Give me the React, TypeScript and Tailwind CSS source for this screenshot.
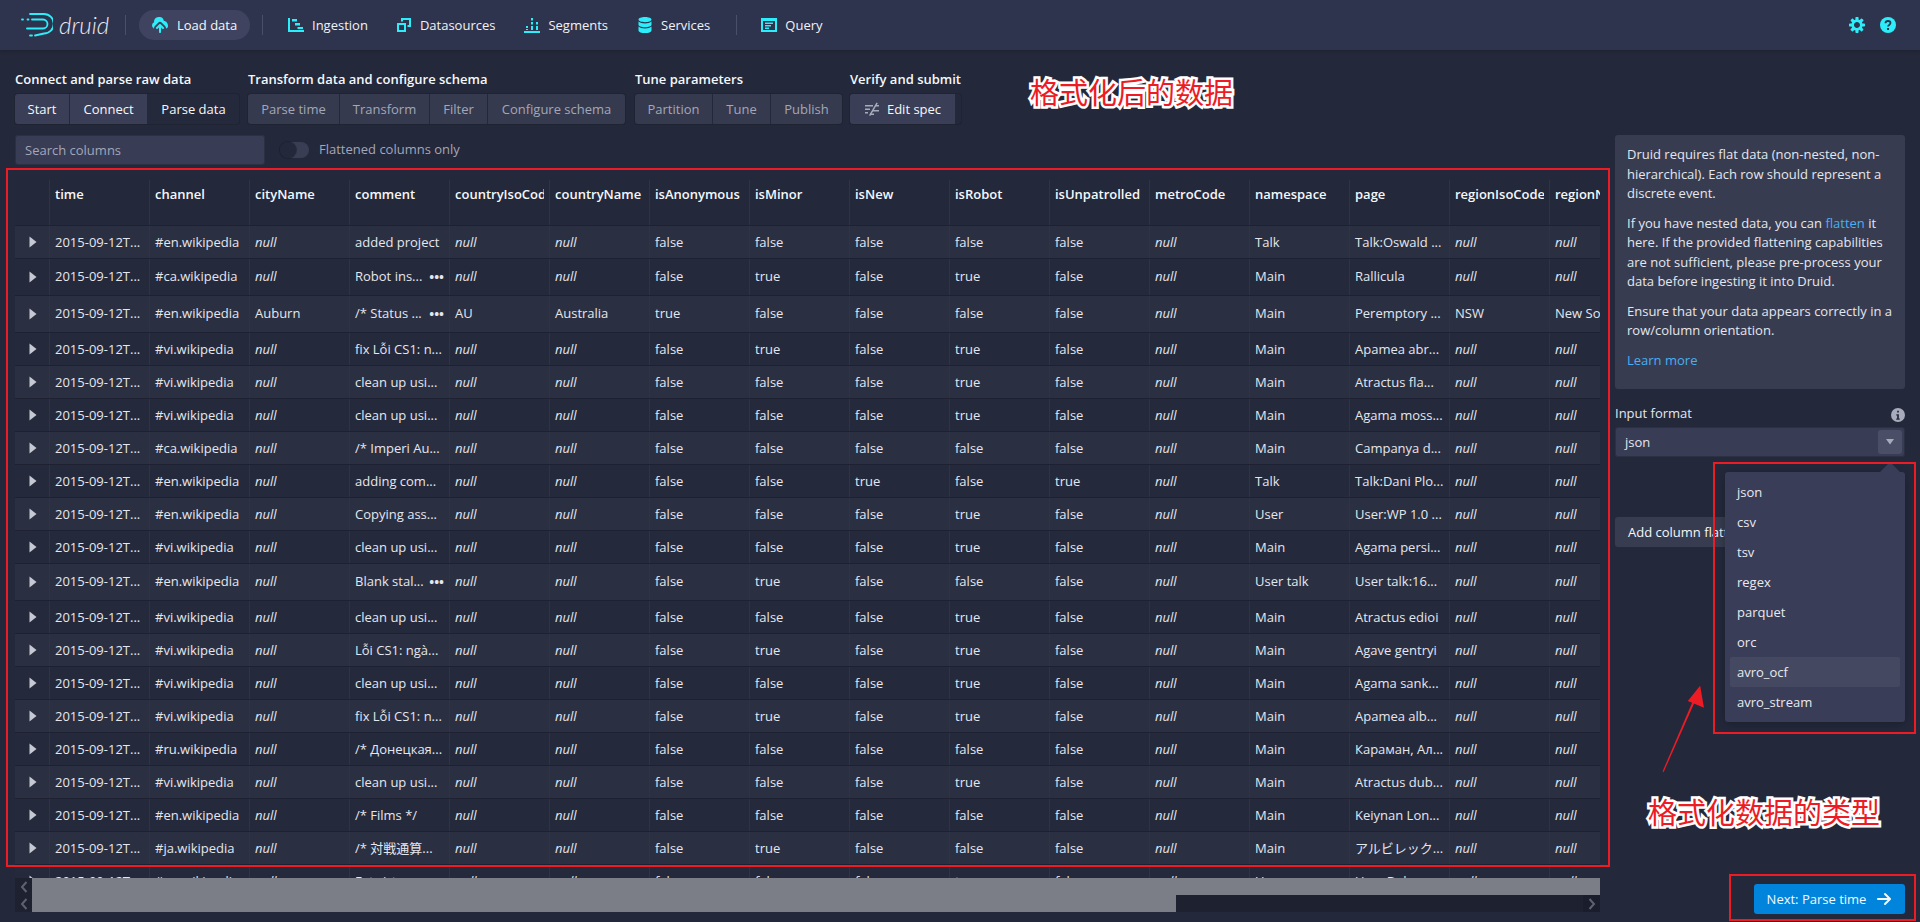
import type { ReactNode } from 'react';

const COLUMNS = [
  'time', 'channel', 'cityName', 'comment', 'countryIsoCode', 'countryName', 'isAnonymous', 'isMinor',
  'isNew', 'isRobot', 'isUnpatrolled', 'metroCode', 'namespace', 'page', 'regionIsoCode', 'regionName',
];

const TIME = '2015-09-12T...';

// channel, city, comment, more?, iso, country, anon, minor, new, robot, unpatrolled, ns, page, region iso, region
type Row = [string, string, string, boolean, string, string, string, string, string, string, string, string, string, string, string];

const N = 'null';
const F = 'false';
const T = 'true';

const ROWS: Row[] = [
  ['#en.wikipedia', N, 'added project', false, N, N, F, F, F, F, F, 'Talk', 'Talk:Oswald ...', N, N],
  ['#ca.wikipedia', N, 'Robot ins...', true, N, N, F, T, F, T, F, 'Main', 'Rallicula', N, N],
  ['#en.wikipedia', 'Auburn', '/* Status ...', true, 'AU', 'Australia', T, F, F, F, F, 'Main', 'Peremptory ...', 'NSW', 'New South Wales'],
  ['#vi.wikipedia', N, 'fix Lỗi CS1: n...', false, N, N, F, T, F, T, F, 'Main', 'Apamea abr...', N, N],
  ['#vi.wikipedia', N, 'clean up usi...', false, N, N, F, F, F, T, F, 'Main', 'Atractus fla...', N, N],
  ['#vi.wikipedia', N, 'clean up usi...', false, N, N, F, F, F, T, F, 'Main', 'Agama moss...', N, N],
  ['#ca.wikipedia', N, '/* Imperi Au...', false, N, N, F, F, F, F, F, 'Main', 'Campanya d...', N, N],
  ['#en.wikipedia', N, 'adding com...', false, N, N, F, F, T, F, T, 'Talk', 'Talk:Dani Plo...', N, N],
  ['#en.wikipedia', N, 'Copying ass...', false, N, N, F, F, F, T, F, 'User', 'User:WP 1.0 ...', N, N],
  ['#vi.wikipedia', N, 'clean up usi...', false, N, N, F, F, F, T, F, 'Main', 'Agama persi...', N, N],
  ['#en.wikipedia', N, 'Blank stal...', true, N, N, F, T, F, F, F, 'User talk', 'User talk:16...', N, N],
  ['#vi.wikipedia', N, 'clean up usi...', false, N, N, F, F, F, T, F, 'Main', 'Atractus edioi', N, N],
  ['#vi.wikipedia', N, 'Lỗi CS1: ngà...', false, N, N, F, T, F, T, F, 'Main', 'Agave gentryi', N, N],
  ['#vi.wikipedia', N, 'clean up usi...', false, N, N, F, F, F, T, F, 'Main', 'Agama sank...', N, N],
  ['#vi.wikipedia', N, 'fix Lỗi CS1: n...', false, N, N, F, T, F, T, F, 'Main', 'Apamea alb...', N, N],
  ['#ru.wikipedia', N, '/* Донецкая...', false, N, N, F, F, F, F, F, 'Main', 'Караман, Ал...', N, N],
  ['#vi.wikipedia', N, 'clean up usi...', false, N, N, F, F, F, T, F, 'Main', 'Atractus dub...', N, N],
  ['#en.wikipedia', N, '/* Films */', false, N, N, F, F, F, F, F, 'Main', 'Keiynan Lon...', N, N],
  ['#ja.wikipedia', N, '/* 対戦通算...', false, N, N, F, T, F, F, F, 'Main', 'アルビレック...', N, N],
  ['#en.wikipedia', N, 'Fate/stay ...', false, N, N, F, F, F, T, F, 'User', 'User:Dalam...', N, N],
];

function Icon({ children, className = 'text-[#2ceefb]' }: { children: ReactNode; className?: string }) {
  return (
    <svg viewBox="0 0 16 16" className={`h-4 w-4 shrink-0 ${className}`} fill="currentColor">
      {children}
    </svg>
  );
}

function NavItem({ icon, label, className = '' }: { icon: ReactNode; label: string; className?: string }) {
  return (
    <div className={`flex h-[30px] items-center gap-[8px] text-[13px] text-[#f0f2f7] ${className}`}>
      {icon}
      <span className="pt-[1px]">{label}</span>
    </div>
  );
}

function Separator({ className = '' }: { className?: string }) {
  return <div className={`h-5 w-px bg-[#4a4e66] ${className}`} />;
}

function StepButton({ label, state, width }: { label: string; state: 'on' | 'active' | 'off'; width: string }) {
  const look = {
    on: 'bg-[#3a3f57] text-[#f5f8fa]',
    active: 'bg-[#25293c] text-[#f5f8fa]',
    off: 'bg-[#363a4f] text-[#a3a7b8]',
  }[state];
  return (
    <div className={`flex h-[30px] items-center justify-center border-r border-[#24283b] pt-[2px] text-[13px] last:border-r-0 ${width} ${look}`}>
      {label}
    </div>
  );
}

function StepGroup({ title, children, className = '' }: { title: string; children: ReactNode; className?: string }) {
  return (
    <div className={className}>
      <div className="mb-[7px] h-[17px] text-[13px] leading-[19px] font-semibold whitespace-nowrap text-[#f5f8fa]">{title}</div>
      <div className="flex overflow-hidden rounded-[3px] shadow-[0_0_0_1px_rgba(16,22,26,0.25)]">{children}</div>
    </div>
  );
}

function Cell({ value, more, tall }: { value: string; more?: boolean; tall: boolean }) {
  return (
    <div
      className={`flex h-full w-[100px] shrink-0 items-center justify-between overflow-hidden border-r border-[#2f3347] pr-[5px] pl-[5px] whitespace-nowrap ${
        tall ? '' : 'pt-[2px]'
      }`}
    >
      <span className={value === 'null' ? 'italic' : ''}>{value}</span>
      {more && <span className="text-[13px] leading-none font-bold">•••</span>}
    </div>
  );
}

function TableRow({ row, index }: { row: Row; index: number }) {
  const [channel, city, comment, more, iso, country, anon, minor, isNew, robot, unpatrolled, ns, page, regionIso, region] = row;
  const values = [TIME, channel, city];
  const rest = [iso, country, anon, minor, isNew, robot, unpatrolled, 'null', ns, page, regionIso, region];
  return (
    <div
      className={`flex shrink-0 items-stretch border-b border-[#1e2132] text-[13px] text-[#e4e7ee] ${more ? 'h-[37px]' : 'h-[33px]'} ${
        index % 2 === 0 ? 'bg-[#2b2f42]' : 'bg-[#25293c]'
      }`}
    >
      <div className="flex h-full w-[35px] shrink-0 items-center justify-center border-r border-[#2f3347] pl-[2px]">
        <svg viewBox="0 0 8 12" className="h-3 w-2 text-[#c6c9d4]" fill="currentColor">
          <path d="M0.5 0.5 7.5 6 0.5 11.5z" />
        </svg>
      </div>
      {values.map((v, i) => (
        <Cell key={i} value={v} tall={more} />
      ))}
      <Cell value={comment} more={more} tall={more} />
      {rest.map((v, i) => (
        <Cell key={i} value={v} tall={more} />
      ))}
    </div>
  );
}

function DataTable() {
  return (
    <div className="flex h-[698px] w-[1585px] flex-col overflow-hidden">
      <div className="flex h-[46px] shrink-0 border-b border-[#1e2132] text-[13px] font-semibold text-[#f5f8fa]">
        <div className="w-[35px] shrink-0 border-r border-[#2f3347]" />
        {COLUMNS.map((c) => (
          <div key={c} className="w-[100px] shrink-0 border-r border-[#2f3347] pt-[5px] pr-[5px] pl-[5px]">
            <div className="overflow-hidden whitespace-nowrap">{c}</div>
          </div>
        ))}
      </div>
      {ROWS.map((r, i) => (
        <TableRow key={i} row={r} index={i} />
      ))}
    </div>
  );
}

function ScrollBars() {
  const chevron = (
    <svg viewBox="0 0 8 12" className="h-[12px] w-[8px] text-[#5d6172]" fill="none" stroke="currentColor" strokeWidth="2">
      <path d="M6.5 1 2 6l4.500 5" />
    </svg>
  );
  return (
    <div className="flex w-[1585px] flex-col">
      <div className="flex h-[17px]">
        <div className="flex w-[17px] items-center justify-center bg-[#1e2130]">{chevron}</div>
        <div className="flex-1 bg-[#7b7e87]" />
      </div>
      <div className="flex h-[17px]">
        <div className="flex w-[17px] items-center justify-center bg-[#1e2130]">{chevron}</div>
        <div className="w-[1144px] bg-[#7b7e87]" />
        <div className="flex-1 bg-[#1e2130]" />
        <div className="flex w-[17px] items-center justify-center bg-[#1a1d2b]">
          <svg viewBox="0 0 8 12" className="h-[12px] w-[8px] text-[#5d6172]" fill="none" stroke="currentColor" strokeWidth="2">
            <path d="M1.500 1 6 6l-4.500 5" />
          </svg>
        </div>
      </div>
    </div>
  );
}

function Navbar() {
  return (
    <div className="relative z-10 flex h-[50px] items-center bg-[#2f344e] pr-[24px] pl-[21px] shadow-[0_1px_3px_rgba(16,22,26,0.35)]">
      <svg viewBox="0 0 32 24" className="h-[24px] w-[32px] text-[#2ceefb]" fill="none" stroke="currentColor" strokeWidth="1.800" strokeLinecap="round">
        <path d="M9 1h14a9 9 0 0 1 0 19.500L14 22.500" />
        <path d="M6.500 6.500h1" />
        <path d="M11 6.500h11a4.500 4.500 0 0 1 0 9H6" />
        <path d="M1 6.500h1" />
        <path d="M9 22.500h2" />
      </svg>
      <span className="ml-[6px] w-[50px] text-[24px] leading-none font-light text-[#e8eaf0] italic font-['Lato','Open_Sans',sans-serif]">druid</span>
      <Separator className="ml-[16px]" />
      <div className="ml-[13px] flex h-[30px] w-[111px] items-center gap-[9px] rounded-full bg-[#3f4360] pl-[13px] text-[13px] text-[#f5f8fa]">
        <Icon>
          <path d="M8.710 7.290C8.530 7.110 8.280 7 8 7s-.530.110-.710.290l-3 3a1.003 1.003 0 001.420 1.420L7 10.410V15c0 .550.450 1 1 1s1-.450 1-1v-4.590l1.290 1.290c.180.190.430.300.710.300a1.003 1.003 0 00.71-1.710l-3-3zM12 4c-.030 0-.070 0-.100.010A5 5 0 002 5c0 .110.010.220.020.330a3.495 3.495 0 00.070 6.370c-.050-.230-.090-.460-.090-.700 0-.830.340-1.580.880-2.120l3-3a2.993 2.993 0 014.240 0l3 3c.540.540.880 1.290.880 2.120 0 .160-.020.320-.050.470C15.170 11.420 16 10.300 16 9c0-2.760-1.790-5-4-5z" />
        </Icon>
        <span className="pt-[1px]">Load data</span>
      </div>
      <Separator className="ml-[12px]" />
      <NavItem
        className="ml-[25px]"
        label="Ingestion"
        icon={
          <Icon>
            <path d="M0 1h2v12h14v2H0z M4 2h5v2.500H4z M7 6h5v2.500H7z M9.500 10H15v2H9.500z" />
          </Icon>
        }
      />
      <NavItem
        className="ml-[28px]"
        label="Datasources"
        icon={
          <Icon>
            <path fillRule="evenodd" d="M1 6h9v9H1zM3 8v5h5V8z" />
            <path d="M5 1h10v9h-3.500V8H13V3H7v1.500H5z" />
          </Icon>
        }
      />
      <NavItem
        className="ml-[29px]"
        label="Segments"
        icon={
          <Icon>
            <path d="M0 14h16v2H0z M2 9h2v2H2z M2 12h2v1H2z M7 1h2v2.500H7z M7 5h2v2.500H7z M7 9h2v4H7z M12 5h2v2.500h-2z M12 9h2v4h-2z" />
          </Icon>
        }
      />
      <NavItem
        className="ml-[29px]"
        label="Services"
        icon={
          <Icon>
            <path d="M8 0C4.500 0 1.500 1 1.500 2.600S4.500 5.200 8 5.200s6.500-1 6.500-2.600S11.500 0 8 0zM1.500 4.500v3.300C1.500 9.300 4.500 10.300 8 10.300s6.500-1 6.500-2.500V4.500C13.200 5.800 10.700 6.400 8 6.400S2.800 5.800 1.500 4.500zM1.500 9.500v3.900C1.500 15 4.500 16 8 16s6.500-1 6.500-2.600V9.500c-1.300 1.300-3.800 2-6.500 2s-5.200-.7-6.500-2z" />
          </Icon>
        }
      />
      <Separator className="ml-[26px]" />
      <NavItem
        className="ml-[24px]"
        label="Query"
        icon={
          <Icon>
            <path fillRule="evenodd" d="M0 1h16v14H0zM2 4v9h12V4z" />
            <path d="M4 5.500h8v1.500H4zM4 8h6v1.500H4zM4 10.500h4V12H4z" />
          </Icon>
        }
      />
      <div className="ml-auto flex items-center gap-[15px]">
        <Icon>
          <path d="M15.190 6.390h-1.850c-.110-.370-.270-.710-.450-1.040l1.360-1.360c.310-.310.310-.820 0-1.130l-1.130-1.130a.803.803 0 00-1.130 0l-1.360 1.360c-.330-.180-.670-.330-1.040-.440V.790c0-.440-.360-.800-.800-.800h-1.600c-.440 0-.800.360-.800.800v1.860c-.390.120-.750.280-1.100.470l-1.300-1.300c-.300-.300-.790-.300-1.090 0L1.820 2.910c-.300.300-.300.790 0 1.090l1.300 1.300c-.200.340-.360.700-.480 1.090H.790c-.440 0-.800.360-.800.800v1.600c0 .440.360.800.800.800h1.850c.110.370.270.710.450 1.040l-1.360 1.360c-.310.310-.310.820 0 1.130l1.130 1.130c.310.310.820.310 1.130 0l1.360-1.360c.330.180.670.330 1.040.440v1.860c0 .440.360.800.800.800h1.600c.440 0 .800-.360.800-.800v-1.860c.390-.120.750-.280 1.100-.470l1.300 1.300c.300.300.790.300 1.090 0l1.090-1.090c.300-.300.300-.790 0-1.090l-1.300-1.300c.190-.350.360-.710.480-1.100h1.850c.440 0 .800-.360.800-.800v-1.600a.816.816 0 00-.810-.790zm-7.200 4.600c-1.660 0-3-1.340-3-3s1.340-3 3-3 3 1.340 3 3-1.340 3-3 3z" />
        </Icon>
        <Icon>
          <circle cx="8" cy="8" r="8" />
          <path d="M5.500 6.200C5.500 4.800 6.600 4 8 4s2.500.8 2.500 2.100c0 1.800-2.500 1.800-2.500 3.400" fill="none" stroke="#2f344e" strokeWidth="1.800" />
          <rect x="7" y="11" width="2" height="2" fill="#2f344e" />
        </Icon>
      </div>
    </div>
  );
}

function StepsBar() {
  return (
    <div className="flex h-[54px] gap-[9px] px-[15px]">
      <StepGroup title="Connect and parse raw data">
        <StepButton label="Start" state="on" width="w-[55px]" />
        <StepButton label="Connect" state="on" width="w-[78px]" />
        <StepButton label="Parse data" state="active" width="w-[91px]" />
      </StepGroup>
      <StepGroup title="Transform data and configure schema">
        <StepButton label="Parse time" state="off" width="w-[92px]" />
        <StepButton label="Transform" state="off" width="w-[90px]" />
        <StepButton label="Filter" state="off" width="w-[58px]" />
        <StepButton label="Configure schema" state="off" width="w-[137px]" />
      </StepGroup>
      <StepGroup title="Tune parameters" className="ml-[1px]">
        <StepButton label="Partition" state="off" width="w-[78px]" />
        <StepButton label="Tune" state="off" width="w-[58px]" />
        <StepButton label="Publish" state="off" width="w-[71px]" />
      </StepGroup>
      <StepGroup title="Verify and submit" className="-ml-[1px]">
        <div className="flex h-[30px] w-[105px] items-center justify-center gap-[7px] bg-[#3a3f57] text-[13px] text-[#f5f8fa]">
          <Icon className="text-[#a7abbb]">
            <path d="M1 4h8v1.500H1zM1 7.500h5V9H1zM1 11h3v1.500H1zM8 9h7v1.500H8zM6 12.500h4V14H6zM11 4h4v1.500h-4z" />
            <path d="M12.500 1.500 13.800 2.300 6.300 15 5 14.200z" />
          </Icon>
          <span className="pt-[2px]">Edit spec</span>
        </div>
      </StepGroup>
    </div>
  );
}

function SidePanel() {
  return (
    <div className="flex h-[779px] w-[290px] shrink-0 flex-col text-[13px] text-[#e4e7ee]">
      <div className="h-[254px] rounded-[3px] bg-[#383c50] px-[12px] py-[10px] leading-[19.500px]">
        <p className="mb-[10px]">Druid requires flat data (non-nested, non-hierarchical). Each row should represent a discrete event.</p>
        <p className="mb-[10px]">
          If you have nested data, you can <span className="text-[#48aff0]">flatten</span> it here. If the provided flattening capabilities are not sufficient, please pre-process your data before ingesting it into Druid.
        </p>
        <p className="mb-[10px]">Ensure that your data appears correctly in a row/column orientation.</p>
        <p className="text-[#48aff0]">Learn more</p>
      </div>
      <div className="mt-[14px] flex h-[24px] items-center justify-between">
        <span className="mb-[3px]">Input format</span>
        <svg viewBox="0 0 16 16" className="h-[14px] w-[14px] text-[#a7abbb]" fill="currentColor">
          <path fillRule="evenodd" d="M8 0a8 8 0 1 0 0 16A8 8 0 0 0 8 0zM7 3h2v2H7zM6 7h3v5h1v1.500H6V12h1V8.500H6z" />
        </svg>
      </div>
      <div className="flex h-[30px] items-center justify-between rounded-[3px] bg-[#383c55] pr-[3px] pl-[10px] shadow-[inset_0_0_0_1px_rgba(16,22,26,0.3)]">
        <span className="pt-[2px]">json</span>
        <div className="flex h-[24px] w-[24px] items-center justify-center rounded-[3px] bg-[#4a4e66]">
          <svg viewBox="0 0 10 6" className="h-[6px] w-[10px] text-[#a7abbb]" fill="currentColor">
            <path d="M1 0h8L5 5.500z" />
          </svg>
        </div>
      </div>
      <div className="mt-[60px] flex h-[30px] w-[155px] items-center rounded-[3px] bg-[#383c50] pt-[2px] pl-[13px] whitespace-nowrap text-[#f5f8fa]">
        Add column flattening
      </div>
      <div className="mt-auto ml-auto flex h-[30px] w-[151px] items-center justify-center gap-[10px] rounded-[3px] bg-[#0084dc] text-[#f5f8fa]">
        <span className="pt-[1px]">Next: Parse time</span>
        <svg viewBox="0 0 16 16" className="h-4 w-4" fill="currentColor">
          <path d="M14.700 7.290l-5-5a1.003 1.003 0 00-1.420 1.420L11.590 7H2c-.550 0-1 .450-1 1s.450 1 1 1h9.590l-3.300 3.290a1.003 1.003 0 001.420 1.420l5-5c.180-.180.290-.430.290-.710s-.110-.530-.300-.710z" />
        </svg>
      </div>
    </div>
  );
}

function FormatMenu() {
  const items = ['json', 'csv', 'tsv', 'regex', 'parquet', 'orc', 'avro_ocf', 'avro_stream'];
  return (
    <div className="absolute top-[472px] left-[1725px] w-[180px] rounded-[3px] bg-[#393d58] p-[5px] text-[13px] text-[#e8eaf0] shadow-[0_2px_8px_rgba(16,22,26,0.4)]">
      <svg viewBox="0 0 20 10" className="absolute top-[-10px] right-[5px] h-[10px] w-[20px] text-[#393d58]" fill="currentColor">
        <path d="M0 10 10 0l10 10z" />
      </svg>
      {items.map((item) => (
        <div key={item} className={`flex h-[30px] items-center rounded-[2px] px-[7px] pt-[2px] ${item === 'avro_ocf' ? 'bg-[#444860]' : ''}`}>
          {item}
        </div>
      ))}
    </div>
  );
}

const NOTE_TEXT =
  "absolute text-[29px] leading-none whitespace-nowrap text-[#ed1c24] [-webkit-text-stroke:5px_#ffffff] [paint-order:stroke_fill] font-['Noto_Sans_CJK_SC',sans-serif]";

function Annotations() {
  return (
    <>
      <div className="absolute top-[168px] left-[6px] h-[699px] w-[1604px] border-2 border-[#ed1c24]" />
      <div className="absolute top-[462px] left-[1713px] h-[272px] w-[203px] border-2 border-[#ed1c24]" />
      <div className="absolute top-[874px] left-[1729px] h-[47px] w-[187px] border-2 border-[#ed1c24]" />
      <div className={`${NOTE_TEXT} top-[77px] left-[1030px]`}>格式化后的数据</div>
      <div className={`${NOTE_TEXT} top-[797px] left-[1648px]`}>格式化数据的类型</div>
      <svg viewBox="0 0 50 100" className="absolute top-[682px] left-[1660px] h-[95px] w-[48px] text-[#ed1c24]" fill="currentColor">
        <path d="M2.500 94 36 16l2 1L3.500 95z" />
        <path d="M42 4 46 27 29 20z" />
      </svg>
    </>
  );
}

export default function App() {
  return (
    <div className="relative h-[922px] w-[1920px] overflow-hidden bg-[#24283b] font-['Open_Sans','Noto_Sans_CJK_JP',sans-serif]">
      <Navbar />
      <div className="pt-[20px]">
        <StepsBar />
        <div className="mt-[11px] flex gap-[15px] pl-[15px]">
          <div className="w-[1585px] shrink-0">
            <div className="flex h-[30px] items-center">
              <div className="flex h-[30px] w-[250px] items-center rounded-[3px] bg-[#383c55] pt-[2px] pl-[10px] text-[13px] text-[#a3a7b8] shadow-[inset_0_0_0_1px_rgba(16,22,26,0.3)]">
                Search columns
              </div>
              <div className="ml-[15px] flex h-[16px] w-[29px] justify-start rounded-full bg-[#3a3e55]">
                <div className="h-[16px] w-[16px] rounded-full bg-[#24283b] shadow-[0_0_0_1px_rgba(16,22,26,0.4)]" />
              </div>
              <span className="ml-[10px] text-[13px] text-[#a3a7b8]">Flattened columns only</span>
            </div>
            <div className="mt-[15px]">
              <DataTable />
              <ScrollBars />
            </div>
          </div>
          <SidePanel />
        </div>
      </div>
      <FormatMenu />
      <Annotations />
    </div>
  );
}
